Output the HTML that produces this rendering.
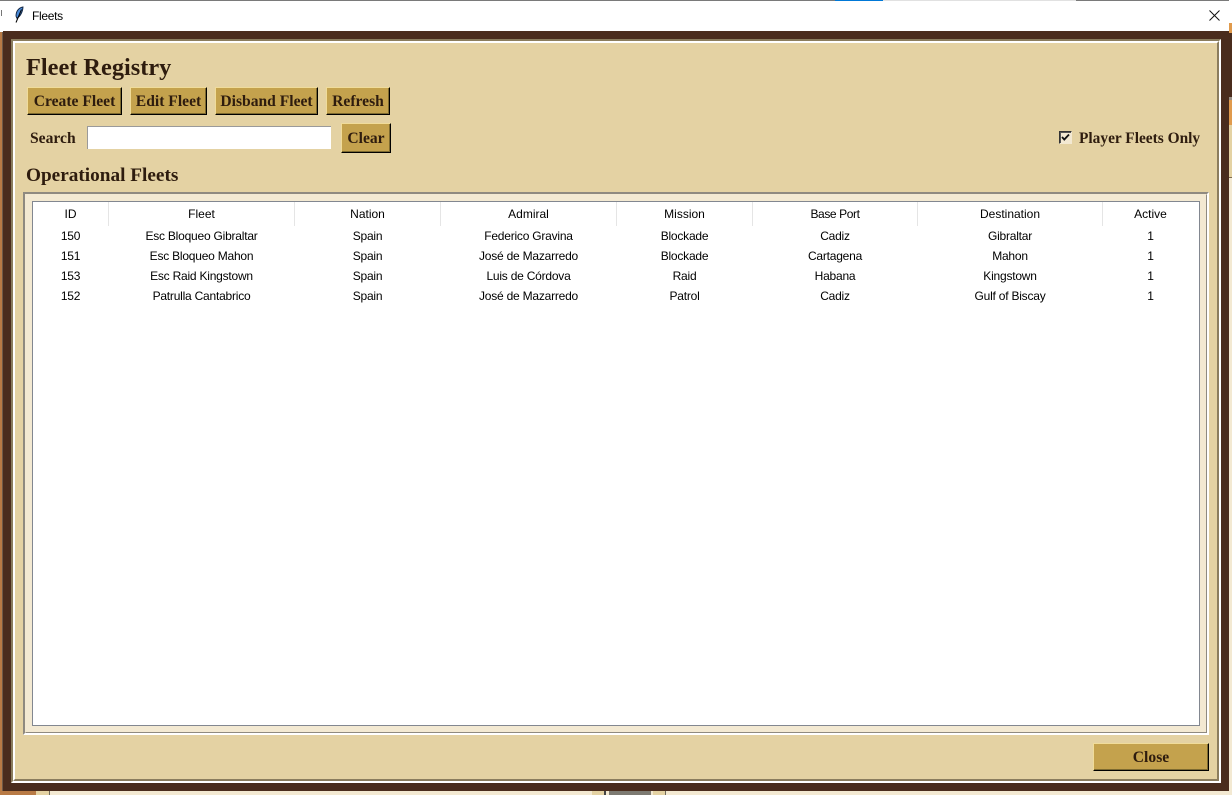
<!DOCTYPE html>
<html><head><meta charset="utf-8"><style>
html,body{margin:0;padding:0;background:#f3e9d2;}
body{position:relative;width:1232px;height:795px;overflow:hidden;}
.a{position:absolute;box-sizing:border-box;}
.t{position:absolute;white-space:nowrap;}
.s{font-family:"Liberation Serif",serif;font-weight:bold;color:#2e1c0e;}
.b{position:absolute;box-sizing:border-box;background:#c4a24d;border-style:solid;border-width:1px 1px 1px 1px;border-color:#f0dc9a #000 #000 #f0dc9a;box-shadow:inset -1px -1px 0 #7d6a30;padding-top:2px;font:bold 15.6px/1 "Liberation Serif",serif;color:#2e1c0e;display:flex;align-items:center;justify-content:center;white-space:nowrap;}
.c{position:absolute;transform:translateX(-50%);white-space:nowrap;font:12px/16px "Liberation Sans",sans-serif;color:#000;}
.r{letter-spacing:-.22px;}
.v{position:absolute;width:1px;top:202px;height:24px;background:#e5e5e5;}
</style></head><body>
<div class="a" style="left:0;top:0;width:3px;height:32px;background:#fff"></div>
<div class="a" style="left:1px;top:10px;width:1px;height:6px;background:#777"></div>
<div class="a" style="left:1229px;top:0;width:3px;height:23px;background:#fff"></div>
<div class="a" style="left:0;top:32px;width:3px;height:763px;background:#b87a45"></div>
<div class="a" style="left:2px;top:32px;width:1px;height:759px;background:#6f5a48"></div>
<div class="a" style="left:1229px;top:23px;width:3px;height:10px;background:#e09a4c"></div>
<div class="a" style="left:1229px;top:33px;width:3px;height:64px;background:#4a2c1d"></div>
<div class="a" style="left:1229px;top:97px;width:3px;height:3px;background:#9a8f86"></div>
<div class="a" style="left:1229px;top:100px;width:3px;height:25px;background:#e09a4c"></div>
<div class="a" style="left:1229px;top:125px;width:3px;height:52px;background:#e4d2a3"></div>
<div class="a" style="left:1229px;top:177px;width:3px;height:1px;background:#7d6a50"></div>
<div class="a" style="left:0;top:791px;width:36px;height:4px;background:#b87a45"></div>
<div class="a" style="left:36px;top:791px;width:14px;height:4px;background:#e4d2a3;border-right:1px solid #6f6a5c"></div>
<div class="a" style="left:592px;top:791px;width:12px;height:4px;background:#e4d2a3"></div>
<div class="a" style="left:604px;top:791px;width:2px;height:4px;background:#444"></div>
<div class="a" style="left:609px;top:791px;width:42px;height:4px;background:#7d7a72"></div>
<div class="a" style="left:653px;top:791px;width:13px;height:4px;background:#e4d2a3;border-right:1px solid #6f6a5c"></div>

<div class="a" style="left:3px;top:31px;width:1226px;height:760px;background:#4a2c1d"></div>
<div class="a" style="left:0;top:0;width:1229px;height:1px;background:#7a7a7a"></div>
<div class="a" style="left:835px;top:0;width:48px;height:1px;background:#0078d7"></div>
<div class="a" style="left:883px;top:0;width:193px;height:1px;background:#e1e1e1"></div>
<div class="a" style="left:3px;top:1px;width:1226px;height:30px;background:#fff"></div>
<svg class="a" style="left:13px;top:6px" width="12" height="18" viewBox="0 0 12 18"><path d="M10 1C6 1.5 3 5 3 10L3.8 12.2C7 11 9.8 6 10 1Z" fill="#4a8ad8" stroke="#10233f" stroke-width=".9"/><path d="M8.5 3.5L3 16.5" stroke="#000" stroke-width="1" fill="none"/></svg>
<div class="t" style="left:32px;top:8px;font:12px/16px 'Liberation Sans',sans-serif;color:#000;letter-spacing:-.3px">Fleets</div>
<svg class="a" style="left:1209px;top:10px" width="11" height="11" viewBox="0 0 11 11"><path d="M.5.5L10.5 10.5M10.5.5L.5 10.5" stroke="#111" stroke-width="1" fill="none"/></svg>

<div class="a" style="left:11px;top:39px;width:1210px;height:744px;background:#fff;border-style:solid;border-width:2px;border-color:#8b7d5e #fff #fff #8b7d5e"></div>
<div class="a" style="left:13px;top:41px;width:1206px;height:740px;background:#e4d2a3;border-style:solid;border-width:2px;border-color:#fff #8b7d5e #8b7d5e #fff"></div>

<div class="t s" style="left:26px;top:53px;font-size:24.35px;line-height:30px">Fleet Registry</div>
<div class="b" style="left:27px;top:87px;width:95px;height:28px">Create Fleet</div>
<div class="b" style="left:130px;top:87px;width:77px;height:28px">Edit Fleet</div>
<div class="b" style="left:215px;top:87px;width:103px;height:28px">Disband Fleet</div>
<div class="b" style="left:326px;top:87px;width:64px;height:28px">Refresh</div>
<div class="t s" style="left:30px;top:130px;font-size:15.6px;line-height:18px">Search</div>
<div class="a" style="left:87px;top:126px;width:244px;height:23px;background:#fff;border-style:solid;border-width:1px 0 0 1px;border-color:#9a9a9a"></div>
<div class="b" style="left:341px;top:123px;width:50px;height:30px">Clear</div>
<div class="a" style="left:1059px;top:131px;width:13px;height:13px;background:#f3e9d2;border-style:solid;border-width:1px;border-color:#333 #f3e9d2 #f3e9d2 #333;box-shadow:inset 1px 1px 0 #555"></div>
<svg class="a" style="left:1059px;top:131px" width="13" height="13" viewBox="0 0 13 13"><path d="M3 6L5.3 8.5L10 3.5" stroke="#111" stroke-width="1.8" fill="none"/></svg>
<div class="t s" style="left:1079px;top:130px;font-size:15.4px;line-height:18px">Player Fleets Only</div>
<div class="t s" style="left:26px;top:165px;font-size:19.25px;line-height:22px">Operational Fleets</div>

<div class="a" style="left:23px;top:192px;width:1186px;height:543px;background:#f3e9d2;border-style:solid;border-width:2px;border-color:#8f8a80 #fff #fff #8f8a80"></div>
<div class="a" style="left:25px;top:194px;width:1182px;height:539px;background:#f3e9d2;border-style:solid;border-width:1px;border-color:#f3e9d2 #8f8a80 #8f8a80 #f3e9d2"></div>
<div class="a" style="left:32px;top:201px;width:1168px;height:525px;background:#fff;border:1px solid #828790"></div>
<div class="v" style="left:108px"></div><div class="v" style="left:294px"></div><div class="v" style="left:440px"></div><div class="v" style="left:616px"></div><div class="v" style="left:752px"></div><div class="v" style="left:917px"></div><div class="v" style="left:1102px"></div>

<div class="c" style="left:70.5px;top:206px">ID</div><div class="c" style="left:201.5px;top:206px">Fleet</div><div class="c" style="left:367.5px;top:206px">Nation</div><div class="c" style="left:528.5px;top:206px">Admiral</div><div class="c" style="left:684.5px;top:206px">Mission</div><div class="c" style="left:835px;top:206px;letter-spacing:-.4px">Base Port</div><div class="c" style="left:1010px;top:206px">Destination</div><div class="c" style="left:1150.5px;top:206px">Active</div>

<div class="c r" style="left:70.5px;top:228px">150</div><div class="c r" style="left:201.5px;top:228px">Esc Bloqueo Gibraltar</div><div class="c r" style="left:367.5px;top:228px">Spain</div><div class="c r" style="left:528.5px;top:228px">Federico Gravina</div><div class="c r" style="left:684.5px;top:228px">Blockade</div><div class="c r" style="left:835px;top:228px">Cadiz</div><div class="c r" style="left:1010px;top:228px">Gibraltar</div><div class="c r" style="left:1150.5px;top:228px">1</div>

<div class="c r" style="left:70.5px;top:248px">151</div><div class="c r" style="left:201.5px;top:248px">Esc Bloqueo Mahon</div><div class="c r" style="left:367.5px;top:248px">Spain</div><div class="c r" style="left:528.5px;top:248px">José de Mazarredo</div><div class="c r" style="left:684.5px;top:248px">Blockade</div><div class="c r" style="left:835px;top:248px">Cartagena</div><div class="c r" style="left:1010px;top:248px">Mahon</div><div class="c r" style="left:1150.5px;top:248px">1</div>

<div class="c r" style="left:70.5px;top:268px">153</div><div class="c r" style="left:201.5px;top:268px">Esc Raid Kingstown</div><div class="c r" style="left:367.5px;top:268px">Spain</div><div class="c r" style="left:528.5px;top:268px">Luis de Córdova</div><div class="c r" style="left:684.5px;top:268px">Raid</div><div class="c r" style="left:835px;top:268px">Habana</div><div class="c r" style="left:1010px;top:268px">Kingstown</div><div class="c r" style="left:1150.5px;top:268px">1</div>

<div class="c r" style="left:70.5px;top:288px">152</div><div class="c r" style="left:201.5px;top:288px">Patrulla Cantabrico</div><div class="c r" style="left:367.5px;top:288px">Spain</div><div class="c r" style="left:528.5px;top:288px">José de Mazarredo</div><div class="c r" style="left:684.5px;top:288px">Patrol</div><div class="c r" style="left:835px;top:288px">Cadiz</div><div class="c r" style="left:1010px;top:288px">Gulf of Biscay</div><div class="c r" style="left:1150.5px;top:288px">1</div>

<div class="b" style="left:1093px;top:743px;width:116px;height:28px">Close</div>
</body></html>
